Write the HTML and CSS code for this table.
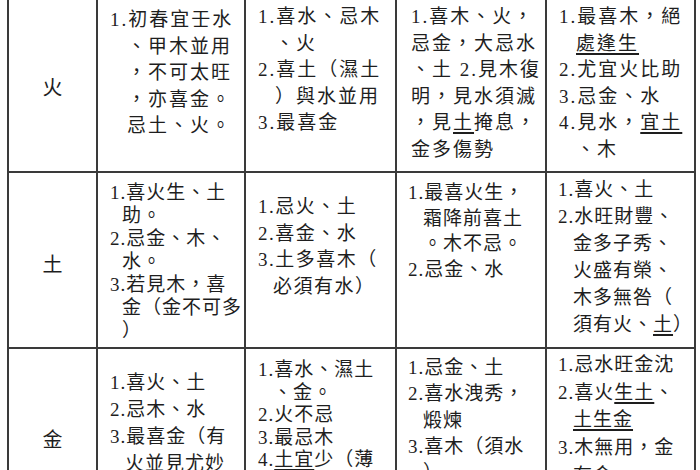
FILE: index.html
```html
<!DOCTYPE html>
<html lang="zh-Hant">
<head>
<meta charset="utf-8">
<title>五行喜忌表</title>
<link rel="stylesheet" href="styles.css">
</head>
<body>
<div class="table">
  <div class="cell head h1">火</div>
  <div class="cell c2 wide r1c2">
    <div class="ln">1.初春宜壬水</div>
    <div class="ln ind">、甲木並用</div>
    <div class="ln ind">，不可太旺</div>
    <div class="ln ind">，亦喜金。</div>
    <div class="ln ind">忌土、火。</div>
  </div>
  <div class="cell c3 wide r1c3">
    <div class="ln">1.喜水、忌木</div>
    <div class="ln ind">、火</div>
    <div class="ln">2.喜土（濕土</div>
    <div class="ln ind">）與水並用</div>
    <div class="ln">3.最喜金</div>
  </div>
  <div class="cell c4 wide r1c4">
    <div class="ln">1.喜木、火，</div>
    <div class="ln">忌金，大忌水</div>
    <div class="ln">、土 2.見木復</div>
    <div class="ln">明，見水須滅</div>
    <div class="ln">，見<u>土</u>掩息，</div>
    <div class="ln">金多傷勢</div>
  </div>
  <div class="cell c5 wide r1c5">
    <div class="ln">1.最喜木，絕</div>
    <div class="ln ind"><u>處逢生</u></div>
    <div class="ln">2.尤宜火比助</div>
    <div class="ln">3.忌金、水</div>
    <div class="ln">4.見水，<u>宜土</u></div>
    <div class="ln ind">、木</div>
  </div>

  <div class="cell head h2">土</div>
  <div class="cell c2 r2c2">
    <div class="ln">1.喜火生、土</div>
    <div class="ln ind2">助。</div>
    <div class="ln">2.忌金、木、</div>
    <div class="ln ind2">水。</div>
    <div class="ln">3.若見木，喜</div>
    <div class="ln ind2">金（金不可多</div>
    <div class="ln ind2">）</div>
  </div>
  <div class="cell c3 r2c3">
    <div class="ln">1.忌火、土</div>
    <div class="ln">2.喜金、水</div>
    <div class="ln">3.土多喜木（</div>
    <div class="ln ind">必須有水）</div>
  </div>
  <div class="cell c4 r2c4">
    <div class="ln">1.最喜火生，</div>
    <div class="ln ind">霜降前喜土</div>
    <div class="ln ind">。木不忌。</div>
    <div class="ln">2.忌金、水</div>
  </div>
  <div class="cell c5 r2c5">
    <div class="ln">1.喜火、土</div>
    <div class="ln">2.水旺財豐、</div>
    <div class="ln ind">金多子秀、</div>
    <div class="ln ind">火盛有榮、</div>
    <div class="ln ind">木多無咎（</div>
    <div class="ln ind">須有火、<u>土</u>）</div>
  </div>

  <div class="cell head h3">金</div>
  <div class="cell c2 r3c2">
    <div class="ln">1.喜火、土</div>
    <div class="ln">2.忌木、水</div>
    <div class="ln">3.最喜金（有</div>
    <div class="ln ind">火並見尤妙</div>
  </div>
  <div class="cell c3 r3c3">
    <div class="ln">1.喜水、濕土</div>
    <div class="ln ind">、金。</div>
    <div class="ln">2.火不忌</div>
    <div class="ln">3.最忌木</div>
    <div class="ln">4.<u>土宜</u>少（薄</div>
  </div>
  <div class="cell c4 r3c4">
    <div class="ln">1.忌金、土</div>
    <div class="ln">2.喜水洩秀，</div>
    <div class="ln ind">煅煉</div>
    <div class="ln">3.喜木（須水</div>
    <div class="ln ind">）</div>
  </div>
  <div class="cell c5 r3c5">
    <div class="ln">1.忌水旺金沈</div>
    <div class="ln">2.喜火<u>生土</u>、</div>
    <div class="ln ind"><u>土生金</u></div>
    <div class="ln">3.木無用，金</div>
    <div class="ln ind">有金</div>
  </div>
</div>
</body>
</html>
```

FILE: styles.css
```css
html, body {
  margin: 0;
  padding: 0;
  background: #ffffff;
  overflow: hidden;
}

.table {
  display: grid;
  grid-template-columns: 87px 146px 149px 148px 147px;
  grid-template-rows: 171px 174px 190px;
  gap: 2px;
  padding: 0 2px 2px;
  margin-left: 7px;
  width: fit-content;
  background: #3a3a3a;
}

.cell {
  background: #ffffff;
  color: #1e1e1e;
  font-family: "Liberation Serif", "Noto Sans CJK TC", serif;
  font-size: 19px;
  letter-spacing: 1px;
  box-sizing: border-box;
  overflow: hidden;
}

.wide {
  letter-spacing: 2px;
}

.ln {
  white-space: nowrap;
}

.ind {
  padding-left: 15px;
}

.wide .ind {
  padding-left: 17px;
}

.ind2 {
  padding-left: 12px;
}

u {
  text-decoration: underline;
  text-decoration-thickness: 1.5px;
  text-underline-offset: 3px;
}

.head {
  text-align: center;
  line-height: 26px;
  font-size: 20px;
  letter-spacing: 0;
}

.h1 { padding-top: 75px; }
.h2 { padding-top: 79px; }
.h3 { padding-top: 78px; }

.c2 { padding-left: 12px; }
.c3 { padding-left: 12px; }
.c4 { padding-left: 12px; }
.c5 { padding-left: 11px; }

.r1c2 { padding-top: 7px; line-height: 26.5px; }
.r1c3 { padding-top: 4px; line-height: 26.5px; }
.r1c4 { padding-top: 4px; line-height: 26.5px; padding-left: 14px; }
.r1c5 { padding-top: 4px; line-height: 26.5px; padding-left: 12px; }

.r2c2 { padding-top: 8px; line-height: 23px; }
.r2c3 { padding-top: 21px; line-height: 26.5px; letter-spacing: 1.5px; }
.r2c4 { padding-top: 7px; line-height: 25.5px; padding-left: 11px; }
.r2c5 { padding-top: 3px; line-height: 27px; }

.r3c2 { padding-top: 20px; line-height: 27px; }
.r3c3 { padding-top: 10px; line-height: 22.5px; }
.r3c4 { padding-top: 6px; line-height: 26.3px; padding-left: 11px; }
.r3c5 { padding-top: 2px; line-height: 27.7px; }
```
